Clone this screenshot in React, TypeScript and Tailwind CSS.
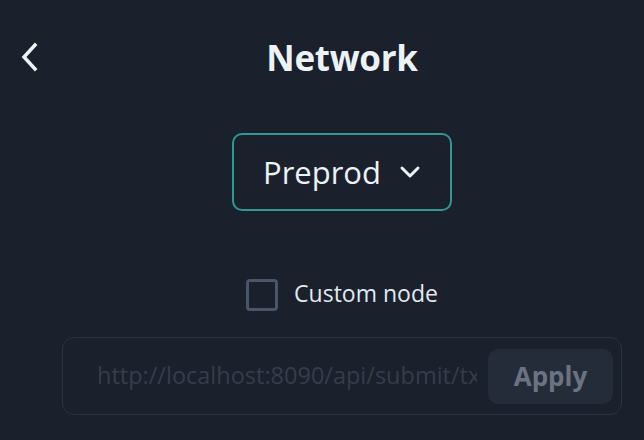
import { useState } from "react";

const font = { fontFamily: '"Open Sans", "Noto Sans", sans-serif' };

const App: React.FC = () => {
    const [custom, setCustom] = useState(false);
    const [url, setUrl] = useState("");

    return (
        <div
            className="w-[644px] h-[440px] overflow-hidden bg-[#1a202c] text-[#edf2f7]"
            style={font}
        >
            {/* header */}
            <div className="grid grid-cols-[62px_1fr_22px] items-center h-[50px] mt-[32px]">
                <button
                    type="button"
                    aria-label="Back"
                    className="pl-[20px] flex items-center text-[#edf2f7]"
                >
                    <svg width="20" height="30" viewBox="0 0 20 30" fill="none">
                        <path
                            d="M15 3 L4 15 L15 27"
                            stroke="currentColor"
                            strokeWidth="3.5"
                            strokeLinecap="square"
                        />
                    </svg>
                </button>
                <h1 className="text-center text-[35px] font-bold leading-none tracking-[-0.3px]">
                    Network
                </h1>
                <div />
            </div>

            <div className="flex flex-col items-center pl-[40px]">
                <button
                    type="button"
                    className="mt-[51px] w-[220px] h-[78px] rounded-[10px] border-2 border-[#319795] flex items-center justify-center gap-[18px]"
                >
                    <span className="text-[31px] leading-none">Preprod</span>
                    <svg width="22" height="14" viewBox="0 0 22 14" fill="none">
                        <path
                            d="M3 3 L11 11 L19 3"
                            stroke="currentColor"
                            strokeWidth="3"
                            strokeLinecap="round"
                            strokeLinejoin="round"
                        />
                    </svg>
                </button>

                <label className="mt-[68px] flex items-center gap-[16px] cursor-pointer">
                    <input
                        type="checkbox"
                        checked={custom}
                        onChange={() => setCustom((v) => !v)}
                        className="appearance-none w-[32px] h-[32px] rounded-[4px] border-[3px] border-[#4a5568] bg-transparent checked:bg-[#319795]"
                    />
                    <span className="text-[23px] leading-none text-[#e2e8f0] -mt-[3px]">
                        Custom node
                    </span>
                </label>

                <div className="mt-[26px] w-[560px] h-[78px] rounded-[12px] border border-[#2b3342] flex items-center pl-[34px] pr-[8px] gap-[11px]">
                    <input
                        value={url}
                        onChange={(e) => setUrl(e.target.value)}
                        disabled={!custom}
                        placeholder="http://localhost:8090/api/submit/tx"
                        className="flex-1 min-w-0 bg-transparent outline-none text-[23.5px] text-[#e2e8f0] placeholder:text-[#353d4b]"
                        style={font}
                    />
                    <button
                        type="button"
                        disabled={!custom}
                        className="w-[125px] h-[55px] rounded-[10px] bg-[#252c39] text-[26px] font-bold text-[#6b7382]"
                    >
                        Apply
                    </button>
                </div>
            </div>
        </div>
    );
};

export default App;
